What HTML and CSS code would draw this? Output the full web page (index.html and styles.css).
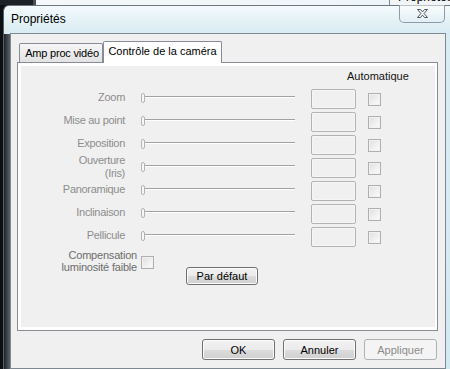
FILE: index.html
```html
<!DOCTYPE html>
<html lang="fr">
<head>
<meta charset="utf-8">
<title>Propriétés</title>
<link rel="stylesheet" href="styles.css">
</head>
<body>
<div class="top-strip"><span class="behind-title">Propriétés</span></div>
<div class="window">
  <div class="titlebar">
    <span class="title">Propriétés</span>
    <button class="close" type="button" aria-label="Fermer">
      <svg width="13" height="11" viewBox="-1.5 -1.5 13 11" aria-hidden="true">
        <path d="M0 0 H3 L5 2.4 L7 0 H10 L6.6 4 L10 8 H7 L5 5.6 L3 8 H0 L3.4 4 Z" fill="#f6f8f9" stroke="#4e565e" stroke-width="1" stroke-linejoin="round"/>
      </svg>
    </button>
  </div>
  <div class="client">
    <div class="tabs">
      <div class="tab">Amp proc vidéo</div>
      <div class="tab active">Contrôle de la caméra</div>
    </div>
    <div class="panel">
      <div class="page">
        <div class="controls">
          <div class="auto-head">Automatique</div>

          <div class="lbl">Zoom</div>
          <div class="slider"><span class="thumb"></span><span class="track"></span></div>
          <div class="field"></div>
          <div class="check"></div>

          <div class="lbl">Mise au point</div>
          <div class="slider"><span class="thumb"></span><span class="track"></span></div>
          <div class="field"></div>
          <div class="check"></div>

          <div class="lbl">Exposition</div>
          <div class="slider"><span class="thumb"></span><span class="track"></span></div>
          <div class="field"></div>
          <div class="check"></div>

          <div class="lbl">Ouverture<br>(Iris)</div>
          <div class="slider"><span class="thumb"></span><span class="track"></span></div>
          <div class="field"></div>
          <div class="check"></div>

          <div class="lbl">Panoramique</div>
          <div class="slider"><span class="thumb"></span><span class="track"></span></div>
          <div class="field"></div>
          <div class="check"></div>

          <div class="lbl">Inclinaison</div>
          <div class="slider"><span class="thumb"></span><span class="track"></span></div>
          <div class="field"></div>
          <div class="check"></div>

          <div class="lbl">Pellicule</div>
          <div class="slider"><span class="thumb"></span><span class="track"></span></div>
          <div class="field"></div>
          <div class="check"></div>
        </div>
        <div class="comp">
          <div class="comp-lbl">Compensation<br>luminosité faible</div>
          <div class="check"></div>
          <button class="btn btn-default" type="button">Par défaut</button>
        </div>
      </div>
    </div>
    <div class="actions">
      <button class="btn" type="button">OK</button>
      <button class="btn" type="button">Annuler</button>
      <button class="btn disabled" type="button" disabled>Appliquer</button>
    </div>
  </div>
</div>
</body>
</html>
```
FILE: styles.css
```css
* { box-sizing: border-box; }
html, body { margin: 0; padding: 0; }
body {
  width: 450px;
  height: 369px;
  overflow: hidden;
  background: #0d1013;
  font-family: "Liberation Sans", Arial, sans-serif;
  font-size: 11px;
  color: #000;
}

.top-strip {
  height: 5px;
  overflow: hidden;
  background: linear-gradient(to right, #1c2126 0, #1c2126 33px, #4a4f55 33px, #4a4f55 36px, #f4f8fa 36px, #eef5f8 389px, #7f8790 389px, #7f8790 390px, #f1f5f7 390px);
}
.behind-title {
  display: block;
  margin-left: 398px;
  margin-top: -10px;
  font-size: 12px;
  line-height: 14px;
  white-space: nowrap;
}

.window {
  margin-left: 3px;
  width: 447px;
  height: 364px;
  border-left: 1px solid #56606a;
  border-top: 1px solid #6b7884;
  border-top-left-radius: 6px;
  display: flex;
  flex-direction: column;
  background:
    linear-gradient(to right, #1f2429 0, #3c434a 3px, #596168 6px) 0 28px / 6px 100% no-repeat,
    linear-gradient(to bottom, #f5fafc 0, #e6f3f7 12px, #d8ecf3 28px, #d3e9f1 100%);
}

.titlebar {
  height: 27px;
  display: flex;
  align-items: flex-start;
  padding-left: 7px;
}
.title {
  margin-top: 6px;
  font-size: 12px;
  line-height: 15px;
}
.close {
  margin-left: auto;
  margin-right: 5px;
  margin-top: -1px;
  width: 46px;
  height: 18px;
  padding: 0 0 1px 0;
  border: 1px solid #8e9ba6;
  border-top: none;
  border-radius: 0 0 5px 5px;
  background: linear-gradient(to bottom, rgba(255,255,255,0.55), rgba(225,238,244,0.5));
  display: flex;
  align-items: center;
  justify-content: center;
}

.client {
  margin-left: 6px;
  width: 436px;
  flex: 1;
  border: 1px solid #7e8891;
  background: #f0f0f0;
}

.tabs {
  height: 28px;
  display: flex;
  align-items: flex-end;
  padding-left: 8px;
}
.tab {
  width: 84px;
  height: 19px;
  display: flex;
  align-items: center;
  justify-content: center;
  padding-left: 2px;
  border: 1px solid #898c95;
  border-bottom: none;
  border-radius: 2px 2px 0 0;
  background: linear-gradient(to bottom, #f6f6f6 0, #ececec 50%, #e2e2e2 100%);
  white-space: nowrap;
  line-height: 13px;
  letter-spacing: -0.2px;
}
.tab.active {
  width: 119px;
  height: 22px;
  margin-bottom: -1px;
  padding-left: 0;
  padding-bottom: 3px;
  background: #fff;
  letter-spacing: 0;
  position: relative;
  z-index: 1;
}

.panel {
  margin-left: 6px;
  margin-right: 7px;
  height: 269px;
  border: 1px solid #898c95;
  padding: 3px 2px 3px 3px;
  background: #fff;
}
.page {
  height: 100%;
  background: #f0f0f0;
  padding-top: 4px;
}

.controls {
  display: grid;
  grid-template-columns: 120px 170px 57px 13px;
  grid-template-rows: 16px repeat(7, 20px);
  row-gap: 3px;
}
.auto-head {
  grid-column: 3 / 5;
  padding-left: 36px;
  white-space: nowrap;
  line-height: 13px;
  color: #141414;
}
.lbl {
  align-self: center;
  margin-bottom: 3px;
  padding-right: 16px;
  text-align: right;
  line-height: 13px;
  color: #8d8d8d;
  letter-spacing: -0.3px;
  white-space: nowrap;
}
.slider {
  align-self: start;
  margin-top: 4px;
  width: 154px;
  height: 10px;
  display: flex;
  align-items: flex-start;
}
.thumb {
  width: 4px;
  height: 10px;
  border: 1px solid #b3b3b3;
  border-radius: 2px;
  background: #f7f7f7;
}
.track {
  flex: 1;
  height: 2px;
  margin-top: 3px;
  border-top: 1px solid #a2a2a2;
  border-bottom: 1px solid #ffffff;
}
.field {
  width: 45px;
  height: 20px;
  border: 1px solid #b3b3b3;
  border-radius: 2px;
  background: #f0f0f0;
  box-shadow: inset 0 0 0 1px #f6f6f6;
}
.check {
  align-self: center;
  width: 13px;
  height: 13px;
  border: 1px solid #afafaf;
  background: linear-gradient(135deg, #dedede 0, #f0f0f0 55%, #fcfcfc 100%);
  box-shadow: inset 0 0 0 1px #f2f2f2;
}

.comp {
  display: flex;
  align-items: flex-start;
  margin-top: 2px;
}
.comp-lbl {
  width: 116px;
  text-align: right;
  line-height: 12px;
  color: #6d6d6d;
  letter-spacing: -0.2px;
  white-space: nowrap;
}
.comp .check {
  align-self: flex-start;
  margin-left: 4px;
  margin-top: 7px;
}

.btn {
  width: 73px;
  height: 21px;
  padding: 0;
  font: inherit;
  font-size: 11px;
  color: #000;
  border: 1px solid #707070;
  border-radius: 3px;
  background: linear-gradient(to bottom, #f2f2f2 0, #ebebeb 50%, #dddddd 50%, #cfcfcf 100%);
  box-shadow: inset 0 0 0 1px #fbfbfb;
}
.btn-default {
  width: 72px;
  height: 18px;
  margin-left: 32px;
  margin-top: 18px;
}
.btn.disabled {
  color: #8b8b8b;
  border-color: #adb2b5;
  background: #f4f4f4;
  box-shadow: none;
}

.actions {
  display: flex;
  justify-content: flex-end;
  gap: 8px;
  padding-right: 8px;
  margin-top: 8px;
}
```
